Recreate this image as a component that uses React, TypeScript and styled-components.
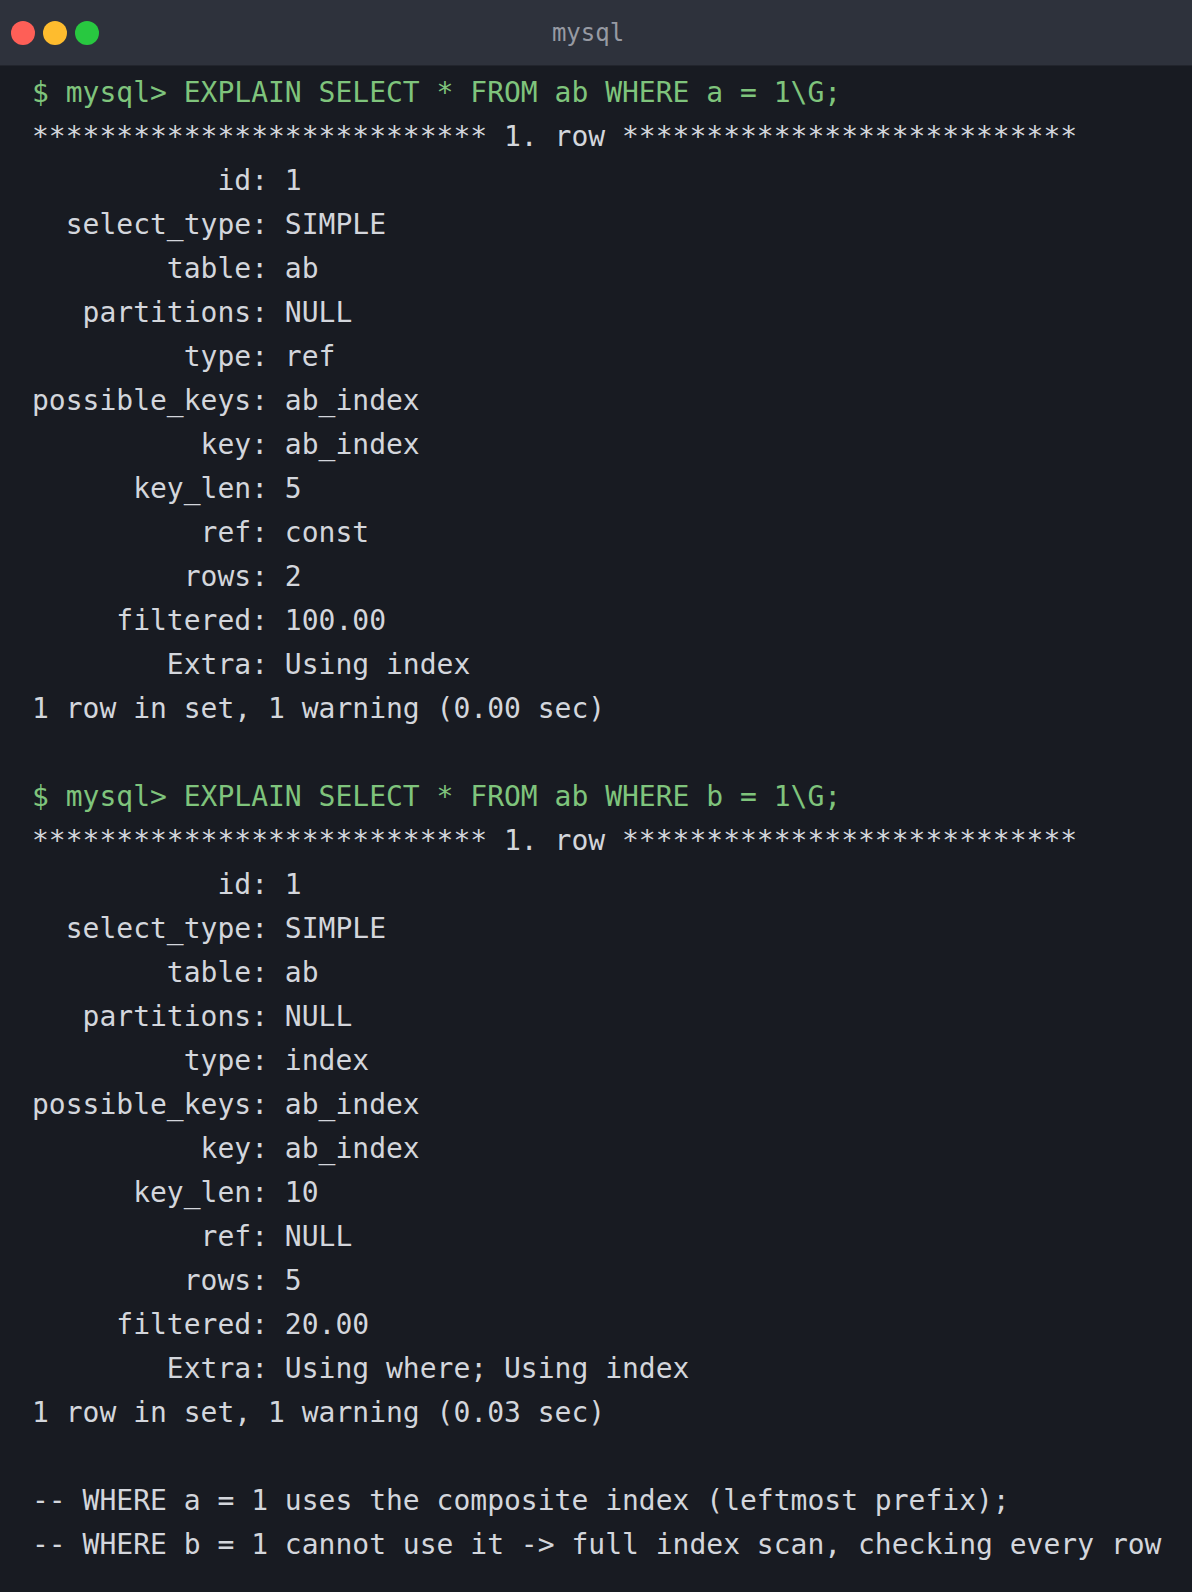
import React from "react";
import styled, { createGlobalStyle } from "styled-components";

const Global = createGlobalStyle`
  html, body {
    margin: 0;
    padding: 0;
    background: #181b22;
  }
  #root {
    min-height: 100vh;
  }
`;

const Window = styled.div`
  display: flex;
  flex-direction: column;
  min-height: 100vh;
  background: #181b22;
`;

const TitleBar = styled.div`
  position: relative;
  height: 66px;
  display: flex;
  align-items: center;
  padding-left: 11px;
  background: #2e323c;
  border-bottom: 1px solid #22252d;
  box-sizing: border-box;
`;

const Lights = styled.div`
  display: flex;
  gap: 8px;
`;

const Light = styled.span<{ $c: string }>`
  width: 24px;
  height: 24px;
  border-radius: 50%;
  background: ${(p) => p.$c};
`;

const Title = styled.div`
  position: absolute;
  left: 0;
  right: 16px;
  text-align: center;
  font-family: "DejaVu Sans Mono", monospace;
  font-size: 24px;
  color: #979aa3;
  pointer-events: none;
`;

const Body = styled.div`
  padding: 5px 32px 24px 32px;
  font-family: "DejaVu Sans Mono", "Liberation Mono", monospace;
  font-size: 28px;
  line-height: 44px;
  color: #d3d6dc;
`;

const Line = styled.div<{ $prompt?: boolean }>`
  white-space: pre;
  height: 44px;
  color: ${(p) => (p.$prompt ? "#7fc47c" : "#d3d6dc")};
`;

type Row = [string, string];

const rows1: Row[] = [
  ["id", "1"],
  ["select_type", "SIMPLE"],
  ["table", "ab"],
  ["partitions", "NULL"],
  ["type", "ref"],
  ["possible_keys", "ab_index"],
  ["key", "ab_index"],
  ["key_len", "5"],
  ["ref", "const"],
  ["rows", "2"],
  ["filtered", "100.00"],
  ["Extra", "Using index"],
];

const rows2: Row[] = [
  ["id", "1"],
  ["select_type", "SIMPLE"],
  ["table", "ab"],
  ["partitions", "NULL"],
  ["type", "index"],
  ["possible_keys", "ab_index"],
  ["key", "ab_index"],
  ["key_len", "10"],
  ["ref", "NULL"],
  ["rows", "5"],
  ["filtered", "20.00"],
  ["Extra", "Using where; Using index"],
];

const stars = "*".repeat(27);

const Block: React.FC<{ query: string; rows: Row[]; time: string }> = ({
  query,
  rows,
  time,
}) => (
  <>
    <Line $prompt>{`$ mysql> ${query}`}</Line>
    <Line>{`${stars} 1. row ${stars}`}</Line>
    {rows.map(([k, v]) => (
      <Line key={k}>{`${k.padStart(13)}: ${v}`}</Line>
    ))}
    <Line>{`1 row in set, 1 warning (${time} sec)`}</Line>
    <Line> </Line>
  </>
);

export default function App() {
  return (
    <Window>
      <Global />
      <TitleBar>
        <Lights>
          <Light $c="#fe5f57" />
          <Light $c="#febc2e" />
          <Light $c="#28c840" />
        </Lights>
        <Title>mysql</Title>
      </TitleBar>
      <Body>
        <Block query="EXPLAIN SELECT * FROM ab WHERE a = 1\G;" rows={rows1} time="0.00" />
        <Block query="EXPLAIN SELECT * FROM ab WHERE b = 1\G;" rows={rows2} time="0.03" />
        <Line>-- WHERE a = 1 uses the composite index (leftmost prefix);</Line>
        <Line>-- WHERE b = 1 cannot use it -&gt; full index scan, checking every row</Line>
      </Body>
    </Window>
  );
}
